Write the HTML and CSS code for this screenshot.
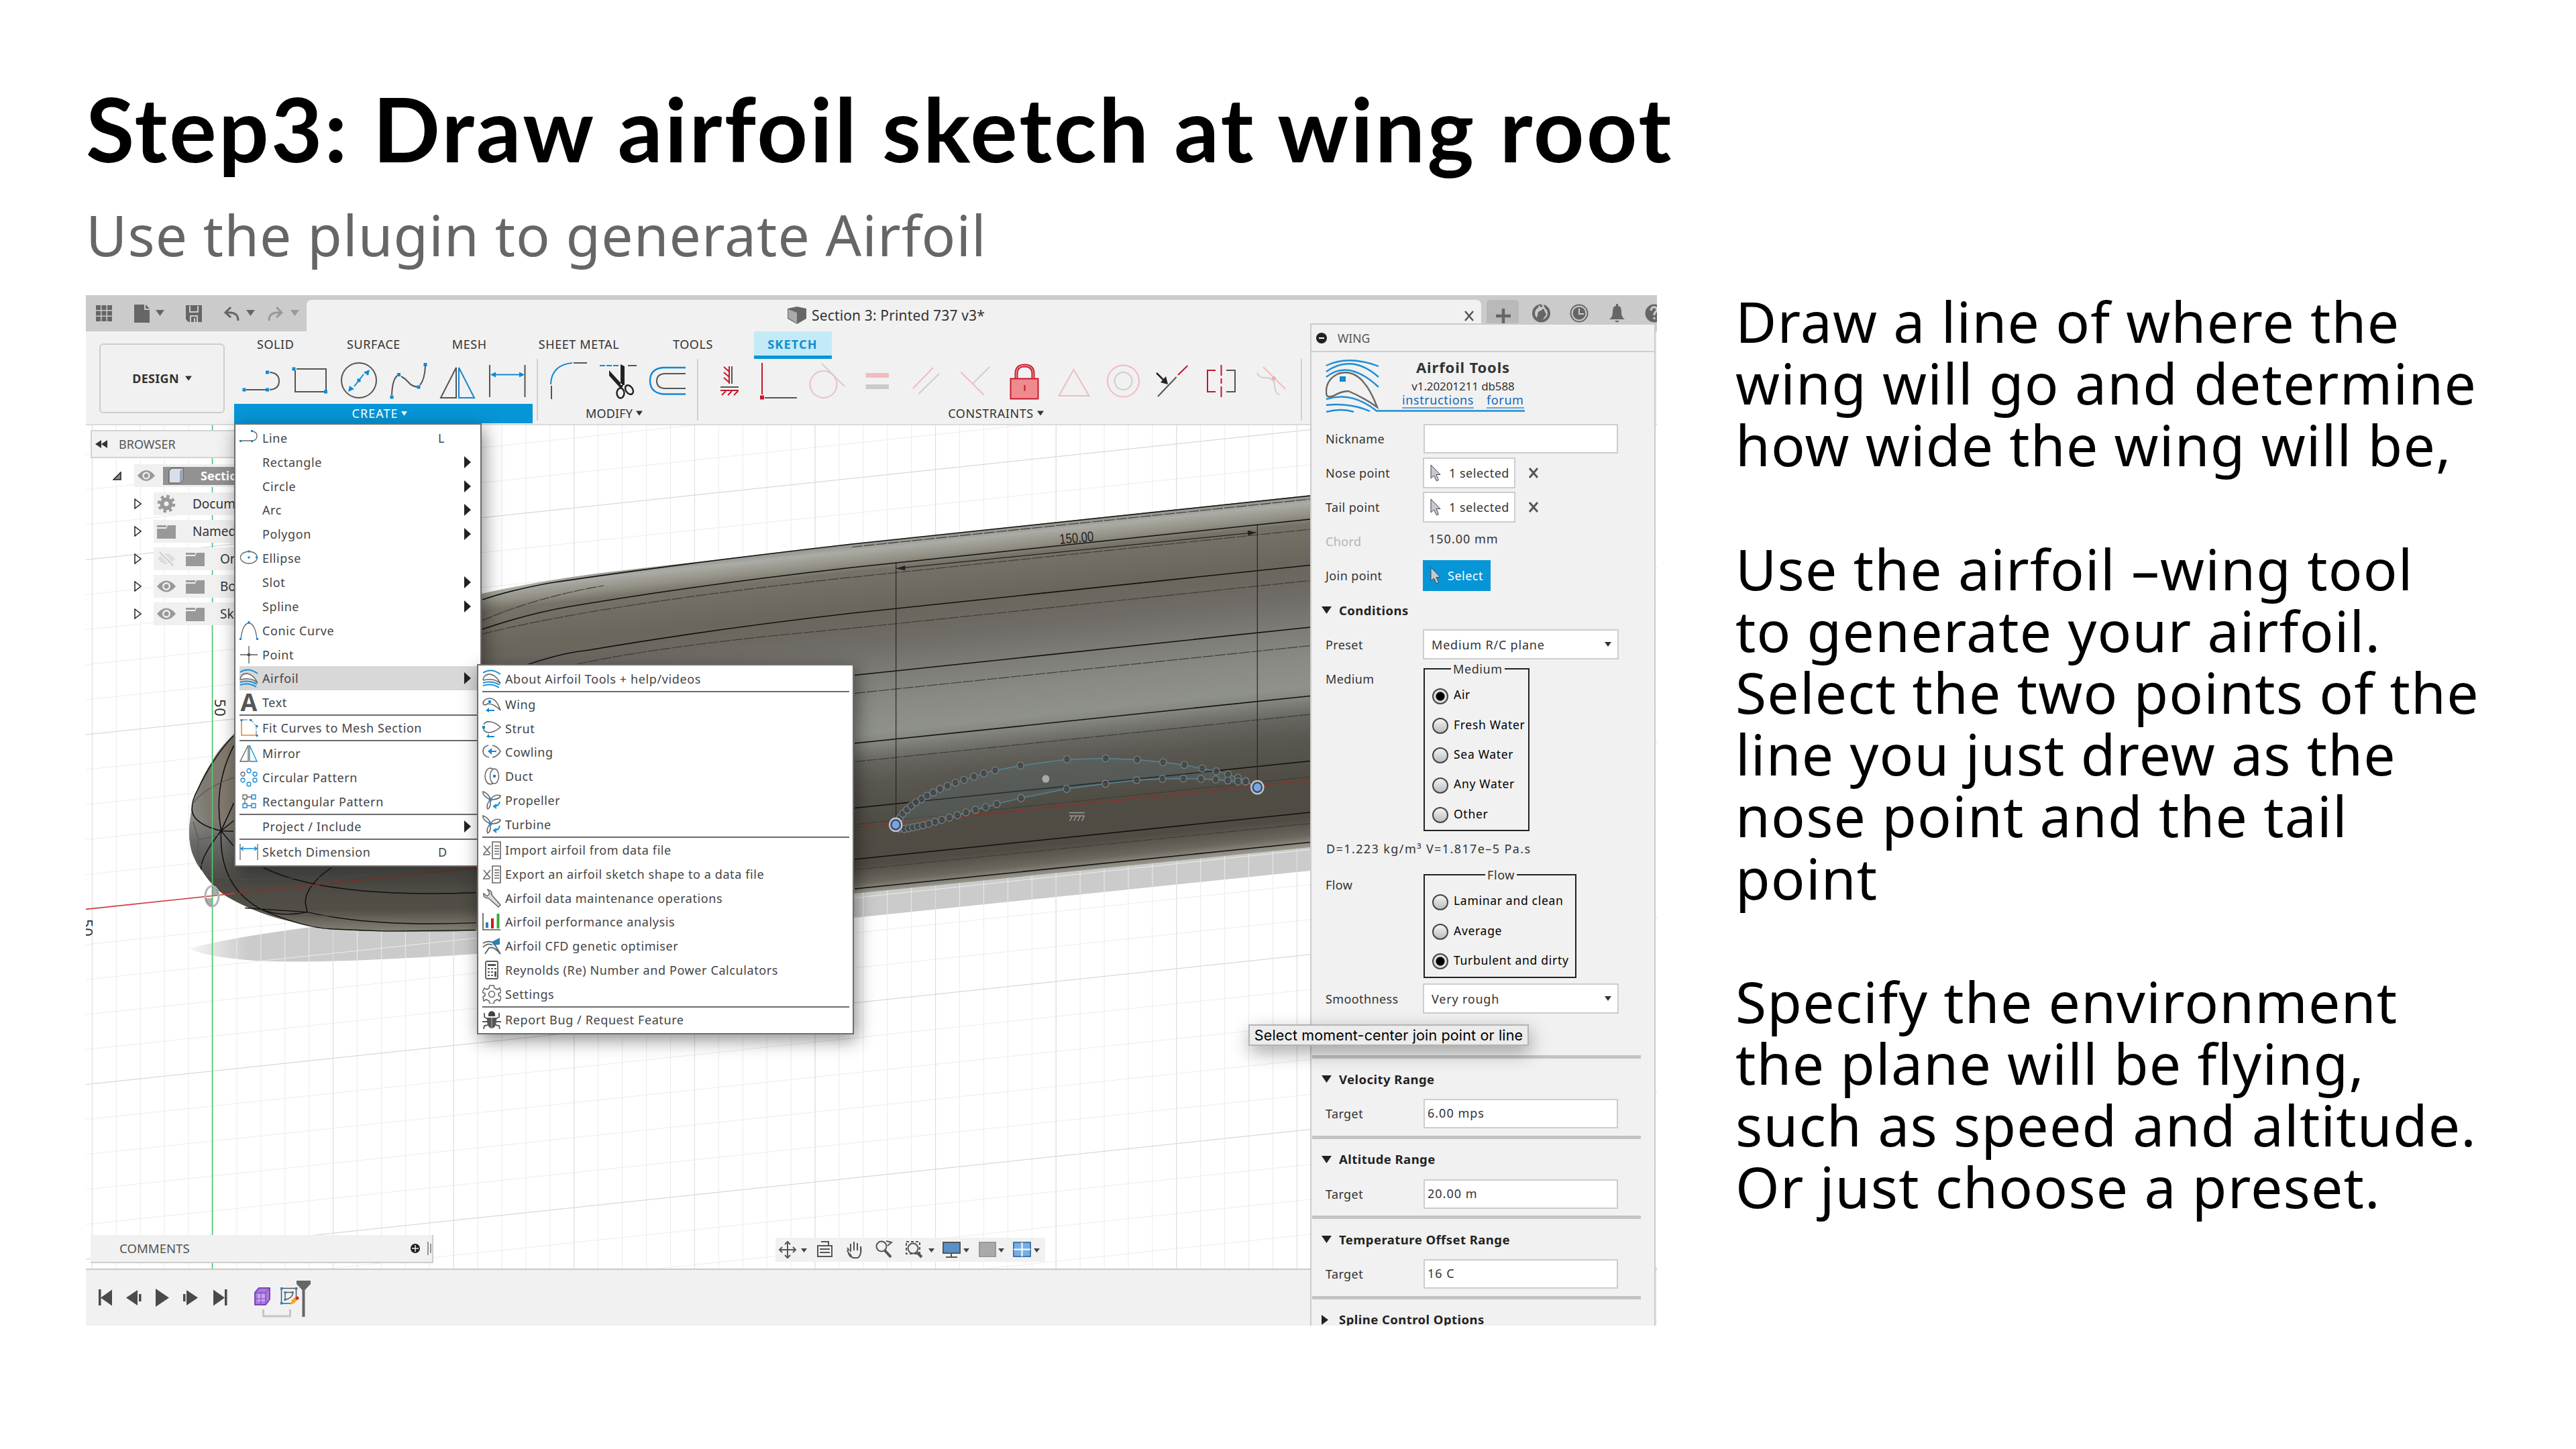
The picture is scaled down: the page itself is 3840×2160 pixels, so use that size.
FILE: index.html
```html
<!DOCTYPE html>
<html lang="en">
<head>
<meta charset="utf-8">
<title>Step3: Draw airfoil sketch at wing root</title>
<link rel="stylesheet" href="styles.css">
</head>
<body>
<svg class="defs" width="0" height="0">
  <symbol id="caret" viewBox="0 0 10 7"><path d="M0 0h10L5 7z" fill="currentColor"/></symbol>
  <symbol id="right" viewBox="0 0 10 18"><path d="M0 0l10 9-10 9z" fill="#222"/></symbol>
  <symbol id="flow" viewBox="0 0 28 28"><g fill="none" stroke-width="2"><path d="M1 5Q13-3 27 7" stroke="#1a8fd8"/><path d="M1 15Q3 6 12 7Q21 9 27 21Q17 12 2 16z" fill="#fff" stroke="#666" stroke-width="1.500"/><path d="M3 11Q9 5 16 9" stroke="#777" stroke-width="1"/><path d="M1 20Q14 16 26 23M1 24Q14 20 25 27" stroke="#1a8fd8"/></g></symbol>
  <symbol id="prop" viewBox="0 0 28 28"><g fill="#fff" stroke="#666" stroke-width="1.600"><path d="M12 13Q0 8 1 1Q10 4 12 13z"/><path d="M12 13Q18 4 27 7Q26 13 12 13z"/><path d="M12 13Q13 25 8 27Q5 21 12 13z"/></g><circle cx="12" cy="13" r="2.500" fill="#1a8fd8"/><path d="M26 16Q25 22 18 23m3-3l-4 3 4 3" fill="none" stroke="#1a8fd8" stroke-width="2"/></symbol>
  <symbol id="data" viewBox="0 0 28 28"><path d="M2 8l10 12M12 8L2 20M1 21h10M15 2h12v25H15zM18 8h7M18 12h7M18 16h7M18 20h7" fill="none" stroke="#666" stroke-width="1.600"/></symbol>
  <symbol id="folder" viewBox="0 0 28 22"><path d="M0 2h14v3H0zM16 2h12v20H0V7h14z" fill="#999"/></symbol>
  <symbol id="eye" viewBox="0 0 28 18"><path d="M0 9Q14-8 28 9Q14 26 0 9z" fill="#999"/><circle cx="14" cy="9" r="4.800" fill="#999" stroke="#f1f1f1" stroke-width="2.400"/></symbol>
  <symbol id="cursor" viewBox="0 0 16 26"><path d="M1 1v20l4.500-4 4 8 3-1.500-3.500-8h6z" fill="#c5c9d4" stroke="#444" stroke-width="1"/></symbol>
  <symbol id="cross" viewBox="0 0 16 16"><path d="M2 1l12 14M14 1L2 15" stroke="#555" stroke-width="3"/></symbol>
</svg>

<main class="slide">
  <h1>Step3: Draw airfoil sketch at wing root</h1>
  <p class="subtitle">Use the plugin to generate Airfoil</p>
  <div class="content">
    <section class="app">
      <header class="topbar">
        <svg class="quick" viewBox="128 440 329 54">
          <path d="M143 455h7v7h-7zm8.500 0h7v7h-7zm8.500 0h7v7h-7zM143 463.500h7v7h-7zm8.500 0h7v7h-7zm8.500 0h7v7h-7zM143 472h7v7h-7zm8.500 0h7v7h-7zm8.500 0h7v7h-7z" fill="#666"/>
          <path d="M200 454h15v8h8v19h-23zM217 454l6 6h-6z" fill="#666"/>
          <path d="M232 462h13l-6.500 9zM367 462h13l-6.500 9z" fill="#666"/><path d="M433 462h13l-6.500 9z" fill="#999"/>
          <path d="M277 455h24v25h-20l-4-4z" fill="#666"/><path d="M283 456v9h12v-9M284 480v-9h10v9M290 474v6" fill="none" stroke="#ccc" stroke-width="2"/>
          <path d="M344 458l-8 8 8 7M336 466h8q11 1 11 12" fill="none" stroke="#666" stroke-width="3"/>
          <path d="M412 458l8 8-8 7M420 466h-8q-11 1-11 12" fill="none" stroke="#999" stroke-width="3"/>
        </svg>
        <div class="doc-tab">
          <svg width="28" height="28" viewBox="0 0 28 28"><path d="M0 4l14-3 14 3v15l-14 8L0 19z" fill="#666"/><path d="M1 5l13 5v16L1 18z" fill="#aaa"/></svg>
          <span class="doc-name">Section 3: Printed 737 v3*</span>
        </div>
        <svg class="status" viewBox="2168 440 302 54">
          <path d="M2208 440h262v54h-262z" fill="#cbcbcb"/><path d="M2200 447q8 0 8 8v-8z" fill="#cbcbcb"/><path d="M2216 494v-41q0-6 6-6h36q6 0 6 6v41z" fill="#b9b9b9"/>
          <path d="M2184 464l12 14M2196 464l-12 14" stroke="#555" stroke-width="2.500"/>
          <path d="M2241 460v22M2230 471h22" stroke="#666" stroke-width="4.500"/>
          <circle cx="2297.500" cy="467" r="11.500" fill="none" stroke="#666" stroke-width="4"/><path d="M2290 478l3-13 8-5 4 9-5 7z" fill="#666"/><path d="M2297 463l-3-7M2302 460l-3-7" stroke="#cbcbcb" stroke-width="2.500"/>
          <circle cx="2354" cy="467" r="12.500" fill="none" stroke="#666" stroke-width="2"/><circle cx="2354" cy="467" r="9.500" fill="#666"/><path d="M2354 460v8h7" fill="none" stroke="#ccc" stroke-width="2"/>
          <path d="M2399 476q5-3 5-11 0-9 5-9v-3h3v3q5 0 5 9 0 8 5 11zM2407 478h7q-3.500 5-7 0z" fill="#666"/>
          <circle cx="2466" cy="467" r="13.500" fill="#666"/><path d="M2461 463q1-6 6-5 5 2 2 6-3 2-3 5v1m0 3v3" fill="none" stroke="#ccc" stroke-width="3"/>
        </svg>
      </header>

      <div class="toolbar">
        <div class="design"><span>DESIGN</span><svg width="10" height="8"><use href="#caret"/></svg></div>
        <div class="ribbon">
          <nav class="tabs"><span>SOLID</span><span>SURFACE</span><span>MESH</span><span>SHEET METAL</span><span>TOOLS</span><span class="active"><b>SKETCH</b></span></nav>
          <div class="groups">
            <div class="group create">
              <svg width="445" height="67" viewBox="349 535 445 67" fill="none" stroke="#555" stroke-width="2">
                <path d="M367 581h29M402 555q14 1 14 13t-14 13M440 552v32h44M442 550h44v32"/>
                <circle cx="535" cy="567" r="26"/><path d="M584 589q1-26 10-30M598 561q6 3 11 9t14 7M626 574q7-8 8-28M680 548l-23 45h23zM730 544v48M782.500 544v48"/>
                <path d="M684 548l23 45h-23zM528 576l14-18M733 558.500h47" stroke="#1089d6"/>
                <path d="M551 551l-2 9-7-5zM519 584l2-9 7 5zM731 558.500l8-4v8zM782 558.500l-8-4v8z" fill="#1089d6" stroke="none"/>
                <path d="M361.500 578.500h5v5h-5zm34.500 0h5v5h-5zm0-26h5v5h-5zM435.500 547.500h5v5h-5zm47.500 34h5v5h-5zM532.500 564.500h5v5h-5zM581.500 589.500h5v5h-5zM592 556h5v5h-5zM621.500 574.500h5v5h-5zM631.500 541h5v5h-5z" fill="#1089d6" stroke="none"/>
              </svg>
              <div class="label"><span>CREATE</span><svg width="9" height="7"><use href="#caret"/></svg></div>
            </div>
            <div class="group modify">
              <svg width="232" height="67" viewBox="807 535 232 67" fill="none" stroke="#555" stroke-width="2">
                <path d="M821 573q1-29 32-32" stroke="#1089d6"/><path d="M855 541h20M822 575v20M936 545h13"/><path d="M894 545h28" stroke="#1089d6" stroke-dasharray="8 2"/>
                <path d="M925 543l6 3v28h-6zM908 552v8l18 20 3-5z" fill="#222" stroke="none"/><ellipse cx="925" cy="586" rx="5.500" ry="7.500" stroke="#222" stroke-width="2.500"/><ellipse cx="938" cy="581" rx="5" ry="7.500" stroke="#222" stroke-width="2.500" transform="rotate(-35 938 581)"/>
                <path d="M1022 548h-34q-19 2-19 19.500t19 20h34" stroke="#1089d6" stroke-width="2.400"/><path d="M1022 557h-32q-11 1-11 11t11 11h32"/>
              </svg>
              <div class="label"><span>MODIFY</span><svg width="10" height="8"><use href="#caret"/></svg></div>
            </div>
            <div class="group constraints">
              <svg width="898" height="67" viewBox="1041 535 898 67" fill="none" stroke="#555" stroke-width="2">
                <path d="M1091 546v26M1074 577h27M1140 593h48M1726 591l27.600-29M1828 552h13v32h-13"/>
                <path d="M1087 546v26M1087 554l-8-7M1087 562l-8-7M1087 570l-8-7M1074 582h27M1082 583l-6 6M1091 583l-6 6M1100 583l-6 6M1136 541v47M1756 559l14.500-14M1812 552h-12v32h12M1820.500 544v16m0 4v8m0 4v16" stroke="#c5162b"/>
                <path d="M1133 589.500h6v6h-6z" fill="#c5162b" stroke="none"/>
                <g stroke="#f1bcc0"><circle cx="1227.500" cy="573" r="20"/><path d="M1361 579l30-31M1432.500 555l34.500 34M1600.500 551l-22 39h45zM1883 547l33 33"/><circle cx="1674.500" cy="568" r="23.500"/></g>
                <g stroke="#cecece"><path d="M1225 542l34 34M1369.500 587l30.500-30M1451 571l24-24M1874 556q3 8 12 7 14 0 14 12 1 12 7 13"/><circle cx="1674.500" cy="568" r="13"/></g>
                <path d="M1290.500 556h34.500v7h-34.500z" fill="#f1bcc0" stroke="none"/><path d="M1290.500 573h34.500v7h-34.500z" fill="#cbcbcb" stroke="none"/><circle cx="1899" cy="564" r="3" fill="#f1aab0" stroke="none"/>
                <path d="M1506.500 564.500h41v30h-41z" fill="#f08a8f" stroke="#c9192c"/><path d="M1515 564v-7q0-12 12.500-12t12.500 12v7" stroke="#c9192c" stroke-width="5"/><path d="M1515 564v-7q0-12 12.500-12t12.500 12v7" stroke="#f08a8f" stroke-width="1.500"/><path d="M1527.500 574v9" stroke="#c9192c"/>
                <path d="M1724 556l10 10" stroke="#222" stroke-width="2.500"/><path d="M1741 573l-3-12-8 9z" fill="#222" stroke="none"/>
              </svg>
              <div class="label"><span>CONSTRAINTS</span><svg width="10" height="8"><use href="#caret"/></svg></div>
            </div>
          </div>
        </div>
      </div>

      <div class="viewport">
        <svg class="scene" viewBox="128 634 2342 1257" preserveAspectRatio="none">
          <defs>
            <pattern id="v" patternUnits="userSpaceOnUse" x="316.500" width="35.920" height="100"><path d="M0 0v100" stroke="#ebebeb" stroke-width="2"/></pattern>
            <pattern id="v5" patternUnits="userSpaceOnUse" x="316.500" width="179.600" height="100"><path d="M0 0v100" stroke="#dcdcdc" stroke-width="2"/></pattern>
            <pattern id="h" patternUnits="userSpaceOnUse" width="400" height="52.150" patternTransform="translate(0 1369) skewY(-6.062)"><path d="M0 0h400" stroke="#ececec" stroke-width="2"/></pattern>
            <pattern id="h5" patternUnits="userSpaceOnUse" width="400" height="260.750" patternTransform="translate(0 1369) skewY(-6.062)"><path d="M0 0h400" stroke="#d6d6d6" stroke-width="2"/></pattern>
            <linearGradient id="skin" gradientUnits="userSpaceOnUse" x1="1270" y1="811" x2="1324.500" y2="1327">
              <stop offset="0" stop-color="#90928b"/><stop offset=".02" stop-color="#abaca5"/><stop offset=".055" stop-color="#928f85"/><stop offset=".08" stop-color="#777268"/><stop offset=".19" stop-color="#6a665b"/><stop offset=".28" stop-color="#6f6b66"/><stop offset=".37" stop-color="#7c7b75"/><stop offset=".46" stop-color="#898a83"/><stop offset=".545" stop-color="#8f918b"/><stop offset=".58" stop-color="#82837e"/><stop offset=".63" stop-color="#67655f"/><stop offset=".69" stop-color="#5a5751"/><stop offset=".8" stop-color="#504d45"/><stop offset=".92" stop-color="#504c44"/><stop offset=".97" stop-color="#6b675e"/><stop offset="1" stop-color="#97958a"/>
            </linearGradient>
            <linearGradient id="nose" gradientUnits="userSpaceOnUse" x1="282" y1="1200" x2="420" y2="1180"><stop offset="0" stop-color="#8b8b84"/><stop offset=".2" stop-color="#7d7970"/><stop offset=".45" stop-color="#857b70"/><stop offset="1" stop-color="#857b70" stop-opacity="0"/></linearGradient>
            <linearGradient id="chin" gradientUnits="userSpaceOnUse" x1="0" y1="1220" x2="0" y2="1390"><stop offset="0" stop-color="#6f706d" stop-opacity="0"/><stop offset=".2" stop-color="#6a6b69"/><stop offset=".55" stop-color="#4c4a44"/><stop offset=".8" stop-color="#534f46"/><stop offset="1" stop-color="#888377"/></linearGradient>
            <linearGradient id="shade" gradientUnits="userSpaceOnUse" x1="282" y1="0" x2="370" y2="0"><stop offset="0" stop-color="#cbcbcb" stop-opacity=".2"/><stop offset="1" stop-color="#cbcbcb"/></linearGradient>
            <marker id="pt" markerUnits="userSpaceOnUse" markerWidth="28" markerHeight="28" refX="14" refY="14" viewBox="0 0 28 28"><circle cx="14" cy="14" r="11" fill="#3c4144" fill-opacity=".75" stroke="#777c7d" stroke-width="3"/></marker>
          </defs>
          <path d="M128 634h2342v1257H128z" fill="#fff"/>
          <path d="M282 1414Q340 1398 464 1382L1953 1230V1298L1274 1368L709 1422Q440 1440 357 1430Q300 1424 282 1414z" fill="url(#shade)"/>
          <path d="M128 634h2342v1257H128z" fill="url(#h)"/><path d="M128 634h2342v1257H128z" fill="url(#v)"/><path d="M128 634h2342v1257H128z" fill="url(#h5)"/><path d="M128 634h2342v1257H128z" fill="url(#v5)"/>
          <path d="M1953 738L1270 811L940 849Q820 862 718 885Q450 960 347 1096Q325 1118 318 1132Q300 1160 294 1179Q284 1202 282 1239Q282 1262 288 1275Q294 1290 300 1296Q318 1325 341 1338Q385 1363 436 1374Q500 1389 575 1388Q650 1390 709 1387.500L1274 1332L1953 1263z" fill="url(#skin)"/>
          <path d="M718 885Q450 960 347 1096Q325 1118 318 1132Q300 1160 294 1179Q284 1202 282 1239Q282 1262 288 1275Q294 1290 300 1296Q318 1325 341 1338Q385 1363 436 1374Q500 1389 575 1388Q650 1390 709 1387.500z" fill="url(#nose)"/>
          <path d="M282 1225Q282 1262 288 1275Q294 1290 300 1296Q318 1325 341 1338Q385 1363 436 1374Q500 1389 575 1388Q650 1390 709 1387.500V1225z" fill="url(#chin)"/>
          <g fill="none" stroke="#111" stroke-width="1.600">
            <path d="M719 894Q760 880 820 869Q1000 842 1270 811L1953 739M719 938Q790 914 850 904Q1040 872 1270 846L1953 774M760 1000Q830 974 872 970Q1060 938 1270 914L1953 842.500M1274 1006.500L1953 935M1274 1108L1953 1037.500M1274 1204.500L1953 1134.500M1274 1281L1953 1211M1274 1325L1953 1255.500"/>
            <g stroke="#3f3d38" stroke-width="1.200" stroke-dasharray="16 2"><path d="M719 925Q800 890 900 873M1270 815.500L1953 744M719 945Q900 900 1270 860.500L1953 789M860 990Q1000 960 1270 936.500L1953 865.500M1274 1033.500L1953 962.500M1274 1135.500L1953 1065M1274 1229L1953 1158M1274 1296.500L1953 1227.500"/></g>
            <g transform="translate(120 900) scale(.3954 .3571)" stroke-width="4">
              <path d="M576 552Q500 640 440 780Q420 820 420 860Q425 920 530 948L576 950M578 592Q500 760 530 948L578 832M530 948L578 905M530 948L576 1010M530 948Q450 1060 455 1110M530 948Q520 1180 680 1275Q760 1310 855 1287L620 1270M855 1287Q1100 1350 1490 1332M848 1250Q845 1180 945 1102M848 1250L855 1287M690 1102Q930 1230 1490 1206M680 1275Q830 1350 950 1358L1150 1367L1490 1362"/>
              <path stroke="#555" stroke-width="3" d="M578 725Q470 765 422 835M425 910L445 985Q430 1060 480 1135L610 1150L1000 1140L1320 1103M445 985L530 965M780 1300Q1000 1310 1490 1272"/>
            </g>
          </g>
          <g fill="none" stroke-width="1.600"><path d="M128 1355.400L350 1331.800" stroke="#d23c3c"/><path d="M350 1331.800L709 1293.700M1274 1234L1953 1163" stroke="#83352a"/><path d="M316.500 634V1891" stroke="#4ccb72"/></g>
          <ellipse cx="316" cy="1336" rx="10" ry="15" fill="none" stroke="#b5b5b5" stroke-width="3"/><path d="M306 1339h10v12q-8-2-10-12zM316 1321q8 3 10 12l-10 2z" fill="#777" fill-opacity=".6"/>
          <g class="axis"><text transform="translate(320 1042) rotate(90)">50</text><text transform="translate(122 1370) rotate(90)">50</text></g>
          <g transform="translate(1270 640) scale(.4592 .4847)">
            <path d="M143 1195V410M1316 1080V292M143 428L1313 317" fill="none" stroke="#222" stroke-width="2.500"/>
            <path d="M143 428l30-9v15zM1313 317l-28-6v16z" fill="#222"/>
            <path d="M142 1215C200 1130 400 1060 547 1034C900 980 1150 1030 1315 1100C1000 1040 650 1110 470 1152C330 1190 200 1245 142 1215z" fill="#5f7378" fill-opacity=".28"/>
            <polyline class="profile" points="142,1215 155,1195 165,1182 178,1170 192,1158 208,1147 226,1137 244,1127 264,1117 286,1106 310,1097 336,1087 364,1078 396,1068 428,1058 465,1049 547,1034 698,1015 824,1012 926,1016 1010,1024 1079,1032 1137,1043 1183,1052 1221,1061 1253,1072 1278,1082 1315,1100"/>
            <polyline class="profile" points="142,1215 155,1228 170,1229 184,1227 198,1224 213,1221 230,1218 249,1213 270,1207 292,1201 316,1194 342,1187 370,1178 401,1170 434,1162 470,1152 549,1134 697,1106 823,1090 924,1079 1008,1075 1076,1074 1133,1075 1181,1077 1220,1080 1253,1083 1278,1083 1315,1100"/>
            <circle cx="629" cy="1075" r="12" fill="#a9aaa6"/>
            <g stroke="#999" stroke-width="3" fill="none"><path d="M705 1179h50M705 1189h50M715 1190l-8 14M728 1190l-8 14M741 1190l-8 14M754 1190l-8 14"/></g>
            <g stroke="#c4c8cc" stroke-width="5"><circle cx="142" cy="1216" r="20" fill="#39506e"/><circle cx="1316" cy="1101" r="20" fill="#39506e"/></g><circle cx="142" cy="1216" r="12" fill="#7da4e0"/><circle cx="1316" cy="1101" r="12" fill="#7da4e0"/>
          </g>
          <text class="dim" transform="translate(1580 811) rotate(-5)" textLength="51" lengthAdjust="spacingAndGlyphs">150.00</text>
        </svg>
      </div>

      <footer class="timeline">
        <svg width="400" height="84" viewBox="128 1892 400 84">
          <path d="M147 1921h3.500v24h-3.500zM167 1921.500v24L150 1933.500zM205 1922v23l-17-11.500zM207 1928h3.500v11h-3.500zM232 1920l20 13.500-20 13.500zM273 1928h3.500v11h-3.500zM278 1922v23l17-11.500zM318 1921.500v24l17-12zM335 1921h3.500v24h-3.500z" fill="#4a4a4a"/>
          <path d="M380 1926l6-7h16v17l-6 8h-16z" fill="#a97bdc" stroke="#7b45b8" stroke-width="2" stroke-linejoin="round"/><path d="M384 1928h11v11h-11z" fill="#c7a4ee"/><path d="M380 1926h16v18M396 1926l6-7M389 1926v18M380 1935h16" fill="none" stroke="#7b45b8"/>
          <path d="M419.500 1919.500h22v17M419.500 1919.500v22.500h14M425 1925.500h12q-1 9-12 11z" fill="none" stroke="#555" stroke-width="1.500"/><path d="M418 1918h3.500v3.500H418zm22 0h3.500v3.500H440zM418 1940h3.500v3.500H418zM423.500 1924h3v3h-3zm11 0h3v3h-3zm-11 11h3v3h-3z" fill="#1089d6"/><path d="M433 1944l2-7 7-6 3 4-7 7z" fill="#f0a91c"/><circle cx="443" cy="1934" r="2.500" fill="#dc1f26"/>
          <path d="M392.500 1951v10h40v-10" fill="none" stroke="#c6c6c6" stroke-width="3"/>
          <path d="M442 1908h21v5l-8.500 9v40h-4v-40l-8.500-9z" fill="#666"/>
        </svg>
      </footer>

      <aside class="browser">
        <div class="browser-head"><svg width="18" height="12"><path d="M9 0v12L0 6zM18 0v12L9 6z" fill="#333"/></svg><span>BROWSER</span></div>
        <div class="node root"><svg width="13" height="13"><path d="M12 1v11H1z" fill="#888" stroke="#222" stroke-width="1.500"/></svg><div class="cell"><svg width="26" height="18"><use href="#eye"/></svg><div class="sel"><svg width="24" height="24"><path d="M1 5l4-4h17v17l-5 5H1z" fill="#d8deea" stroke="#444"/><path d="M17 23V5l5-4v17z" fill="#9aa6ba"/></svg><b>Sectic</b></div></div></div>
        <div class="node"><svg class="tw" width="11" height="16"><path d="M1 1l9 7-9 7z" fill="#fff" stroke="#222" stroke-width="1.500"/></svg><div class="cell"><svg width="28" height="28"><circle cx="14" cy="14" r="6.500" fill="none" stroke="#999" stroke-width="6"/><circle cx="14" cy="14" r="11" fill="none" stroke="#999" stroke-width="4.500" stroke-dasharray="4.320"/></svg><span>Docum</span></div></div>
        <div class="node"><svg class="tw" width="11" height="16"><path d="M1 1l9 7-9 7z" fill="#fff" stroke="#222" stroke-width="1.500"/></svg><div class="cell"><svg width="28" height="22"><use href="#folder"/></svg><span>Named</span></div></div>
        <div class="node"><svg class="tw" width="11" height="16"><path d="M1 1l9 7-9 7z" fill="#fff" stroke="#222" stroke-width="1.500"/></svg><div class="cell deep"><svg width="28" height="22"><path d="M1 11Q14-5 27 11Q14 27 1 11z" fill="#ddd"/><path d="M4 0l20 22" stroke="#f1f1f1" stroke-width="6"/><path d="M4 1l20 20" stroke="#ccc" stroke-width="2"/></svg><svg width="28" height="22"><use href="#folder"/></svg><span>Or</span></div></div>
        <div class="node"><svg class="tw" width="11" height="16"><path d="M1 1l9 7-9 7z" fill="#fff" stroke="#222" stroke-width="1.500"/></svg><div class="cell deep"><svg width="28" height="18"><use href="#eye"/></svg><svg width="28" height="22"><use href="#folder"/></svg><span>Bo</span></div></div>
        <div class="node"><svg class="tw" width="11" height="16"><path d="M1 1l9 7-9 7z" fill="#fff" stroke="#222" stroke-width="1.500"/></svg><div class="cell deep hatch"><svg width="28" height="18"><use href="#eye"/></svg><svg width="28" height="22"><use href="#folder"/></svg><span>Sk</span></div></div>
      </aside>

      <div class="comments"><span>COMMENTS</span><svg width="32" height="22"><circle cx="8" cy="11" r="7" fill="#222"/><path d="M8 6v10M3 11h10" stroke="#eee" stroke-width="1.500"/><path d="M27 1v20M31 4v14" stroke="#777" stroke-width="1.500"/></svg></div>

      <svg class="navbar" width="402" height="36" viewBox="1156 1845 402 36" fill="none" stroke="#555" stroke-width="2">
        <path d="M1156 1845h402v36h-402z" fill="#f1f1f1" stroke="none"/>
        <path d="M1174 1851v24M1162 1863h24M1170 1855l4-4 4 4M1170 1871l4 4 4-4M1166 1859l-4 4 4 4M1182 1859l4 4-4 4"/>
        <path d="M1219 1857h21v16h-21zM1222 1862h15M1222 1867h15M1224 1851h11v6"/>
        <path d="M1266 1864l-3-4M1268 1874q-3-4-5-11M1268 1866v-12M1273 1864v-13M1278 1864v-11M1283 1866v-8q2 12-4 17h-8l-5-7"/>
        <circle cx="1314" cy="1858" r="7.500"/><path d="M1319 1864l9 10" stroke-width="4"/><path d="M1321 1850l8 2-6 5"/>
        <circle cx="1361" cy="1861" r="7.500"/><path d="M1367 1867l7 7" stroke-width="4"/><path d="M1351 1851h20v18h-20z" stroke-dasharray="4 3"/>
        <path d="M1406 1852h25v16h-25z" fill="#5b8fc7"/><path d="M1418 1868v6M1410 1874h17"/>
        <path d="M1460 1852h24v21h-24z" fill="#aaa" stroke="#999"/>
        <path d="M1511 1852h25v21h-25z" fill="#79aee0" stroke="#3f77b2"/><path d="M1523.500 1852v21M1511 1862.500h25" stroke="#fff"/>
        <path d="M1194 1861h9l-4.500 6zM1384 1861h9l-4.500 6zM1436 1861h9l-4.500 6zM1488 1861h9l-4.500 6zM1541 1861h9l-4.500 6z" fill="#444" stroke="none"/>
      </svg>

      <aside class="panel">
        <div class="panel-head"><svg width="16" height="16"><circle cx="8" cy="8" r="8" fill="#222"/><path d="M4 8h8" stroke="#fff" stroke-width="2"/></svg><span>WING</span></div>
        <div class="brand">
          <svg width="298" height="80" viewBox="1976 534 298 80" fill="none" stroke="#1a8fd8" stroke-width="2.400"><path d="M1977 544Q2010 528 2055 545M1977 553Q2015 526 2055 561M1977 561Q2010 534 2055 576M1977 603Q2012 599 2042 612M1977 613Q2000 607 2018 613M1977 594Q2015 582 2052 611.500H2273"/><path d="M1977 585Q1976 565 1995 556Q2030 545 2053 606Q2030 590 2010 582Q2000 582 1988 589Q1977 593 1977 585z" stroke="#666" fill="#f1f1f1"/><path d="M1997 560h9v8h-9z" fill="#1089d6" stroke="none"/></svg>
          <div class="brand-text"><b>Airfoil Tools</b><small>v1.20201211 db588</small><p><a>instructions</a><a>forum</a></p></div>
        </div>
        <div class="form">
          <div class="row"><label>Nickname</label><div class="input"></div></div>
          <div class="row"><label>Nose point</label><div class="pick"><svg width="16" height="26"><use href="#cursor"/></svg><span>1 selected</span></div><svg class="x" width="16" height="16"><use href="#cross"/></svg></div>
          <div class="row"><label>Tail point</label><div class="pick"><svg width="16" height="26"><use href="#cursor"/></svg><span>1 selected</span></div><svg class="x" width="16" height="16"><use href="#cross"/></svg></div>
          <div class="row muted"><label>Chord</label><span class="value">150.00 mm</span></div>
          <div class="row"><label>Join point</label><div class="pick on"><svg width="16" height="26"><use href="#cursor"/></svg><span>Select</span></div></div>
          <h3><svg width="15" height="11"><path d="M0 0h15L7.500 11z" fill="#222"/></svg>Conditions</h3>
          <div class="row preset"><label>Preset</label><div class="select"><span>Medium R/C plane</span><svg width="10" height="7"><use href="#caret"/></svg></div></div>
          <div class="row tall medium"><label>Medium</label><div class="box"><em>Medium</em><p><i class="on"></i>Air</p><p><i></i>Fresh Water</p><p><i></i>Sea Water</p><p><i></i>Any Water</p><p><i></i>Other</p></div></div>
          <div class="note">D=1.223 kg/m³ V=1.817e–5 Pa.s</div>
          <div class="row tall flowrow"><label>Flow</label><div class="box wide"><em>Flow</em><p><i></i>Laminar and clean</p><p><i></i>Average</p><p><i class="on"></i>Turbulent and dirty</p></div></div>
          <div class="row preset"><label>Smoothness</label><div class="select"><span>Very rough</span><svg width="10" height="7"><use href="#caret"/></svg></div></div>
        </div>
        <div class="range"><h3><svg width="15" height="11"><path d="M0 0h15L7.500 11z" fill="#222"/></svg>Velocity Range</h3><div class="row"><label>Target</label><div class="input">6.00 mps</div></div></div>
        <div class="range"><h3><svg width="15" height="11"><path d="M0 0h15L7.500 11z" fill="#222"/></svg>Altitude Range</h3><div class="row"><label>Target</label><div class="input">20.00 m</div></div></div>
        <div class="range"><h3><svg width="15" height="11"><path d="M0 0h15L7.500 11z" fill="#222"/></svg>Temperature Offset Range</h3><div class="row"><label>Target</label><div class="input">16 C</div></div></div>
        <div class="range"><h3><svg width="15" height="15"><path d="M0 0l10 7.500L0 15z" fill="#222"/></svg>Spline Control Options</h3></div>
      </aside>

      <div class="menu create-menu">
        <div class="item"><svg viewBox="0 0 28 28"><path d="M2 18h16M18 4q8 0 8 7t-8 7" fill="none" stroke="#666" stroke-width="1.300"/><path d="M0 17h3v3H0zm17 0h3v3h-3zm0-15h3v3h-3z" fill="#1089d6"/></svg><span>Line</span><kbd>L</kbd></div>
        <div class="item"><svg></svg><span>Rectangle</span><svg class="arrow"><use href="#right"/></svg></div>
        <div class="item"><svg></svg><span>Circle</span><svg class="arrow"><use href="#right"/></svg></div>
        <div class="item"><svg></svg><span>Arc</span><svg class="arrow"><use href="#right"/></svg></div>
        <div class="item"><svg></svg><span>Polygon</span><svg class="arrow"><use href="#right"/></svg></div>
        <div class="item"><svg viewBox="0 0 28 28"><ellipse cx="14" cy="13" rx="12.500" ry="9" fill="none" stroke="#666" stroke-width="1.300"/><path d="M12.500 2.500h3v3h-3zm0 9h3v3h-3zm11.500 0h3v3h-3z" fill="#1089d6"/></svg><span>Ellipse</span></div>
        <div class="item"><svg></svg><span>Slot</span><svg class="arrow"><use href="#right"/></svg></div>
        <div class="item"><svg></svg><span>Spline</span><svg class="arrow"><use href="#right"/></svg></div>
        <div class="item"><svg viewBox="0 0 28 28"><path d="M2 26Q5 3 14 3t12 23" fill="none" stroke="#666" stroke-width="1.300"/><path d="M0 25h3v3H0zm25 0h3v3h-3zM12.500 0h3v3h-3z" fill="#1089d6"/></svg><span>Conic Curve</span></div>
        <div class="item"><svg viewBox="0 0 28 28"><path d="M1 14h26M14 1v26" stroke="#555" stroke-width="1.300"/><path d="M12 12h4v4h-4z" fill="#555"/></svg><span>Point</span></div>
        <div class="item hot"><svg><use href="#flow"/></svg><span>Airfoil</span><svg class="arrow"><use href="#right"/></svg></div>
        <div class="item"><strong>A</strong><span>Text</span></div>
        <hr>
        <div class="item"><svg viewBox="0 0 28 28"><path d="M3 4v21h23" fill="none" stroke="#e08a2c" stroke-width="1.600"/><path d="M3 2h14l8 9v14" fill="none" stroke="#666" stroke-dasharray="9 2"/><path d="M1.500 1h3v3h-3zm14 0h3v3h-3zm9 9h3v3h-3zm0 14h3v3h-3z" fill="#1089d6"/></svg><span>Fit Curves to Mesh Section</span></div>
        <hr>
        <div class="item"><svg viewBox="0 0 28 28"><path d="M13 2v24H1z" fill="none" stroke="#666" stroke-width="1.300"/><path d="M15 2v24h11z" fill="none" stroke="#1089d6" stroke-width="1.300"/></svg><span>Mirror</span></div>
        <div class="item"><svg viewBox="0 0 28 28"><g fill="none" stroke="#1089d6" stroke-width="1.300"><circle cx="14" cy="4" r="3"/><circle cx="23" cy="9" r="3"/><circle cx="23" cy="18" r="3"/><circle cx="14" cy="24" r="3"/><circle cx="5" cy="18" r="3"/><circle cx="5" cy="9" r="3" stroke="#666"/></g></svg><span>Circular Pattern</span></div>
        <div class="item"><svg viewBox="0 0 28 28"><path d="M5 4h6v6H5zM11 7h8M8 10v8" fill="none" stroke="#666" stroke-width="1.300"/><path d="M18 4h6v6h-6zM5 17h6v6H5zM18 17h6v6h-6zM11 20h7" fill="none" stroke="#1089d6" stroke-width="1.300"/></svg><span>Rectangular Pattern</span></div>
        <hr>
        <div class="item"><svg></svg><span>Project / Include</span><svg class="arrow"><use href="#right"/></svg></div>
        <hr>
        <div class="item"><svg viewBox="0 0 28 28"><path d="M1 2v24M27 2v24" stroke="#666" stroke-width="1.300"/><path d="M2 9h24M6 6L2 9l4 3M22 6l4 3-4 3" fill="none" stroke="#1089d6" stroke-width="1.300"/></svg><span>Sketch Dimension</span><kbd>D</kbd></div>
      </div>

      <div class="menu sub-menu">
        <div class="item"><svg><use href="#flow"/></svg><span>About Airfoil Tools + help/videos</span></div>
        <hr>
        <div class="item"><svg viewBox="0 0 28 28"><path d="M1 12Q3 5 11 5Q21 5 27 23Q18 13 8 13Q2 17 1 12z" fill="none" stroke="#666" stroke-width="1.600"/><path d="M9 8h4v4H9zM7 22h11v2H7zM10 19v7l-5-3z" fill="#1089d6"/></svg><span>Wing</span></div>
        <div class="item"><svg viewBox="0 0 28 28"><path d="M2 8Q4 3 12 4Q20 5 27 12Q18 20 9 20Q2 19 2 14" fill="none" stroke="#666" stroke-width="1.600"/><path d="M0 10h4v4H0zM7 25h11v2H7zM10 22v6l-4-2z" fill="#1089d6"/></svg><span>Strut</span></div>
        <div class="item"><svg viewBox="0 0 28 28"><path d="M9 4Q1 6 1 13t9 9M15 4q7 1 12 9-5 8-12 9" fill="none" stroke="#666" stroke-width="1.600"/><path d="M8 13l6-5v4h7v2h-7v4z" fill="#1089d6"/></svg><span>Cowling</span></div>
        <div class="item"><svg viewBox="0 0 28 28"><ellipse cx="12" cy="14" rx="8" ry="12" fill="none" stroke="#666" stroke-width="1.500"/><ellipse cx="18" cy="14" rx="6.500" ry="11" fill="#fff" stroke="#666" stroke-width="1.500"/><path d="M16 12h4v4h-4z" fill="#1089d6"/></svg><span>Duct</span></div>
        <div class="item"><svg><use href="#prop"/></svg><span>Propeller</span></div>
        <div class="item"><svg><use href="#prop"/></svg><span>Turbine</span></div>
        <hr>
        <div class="item"><svg><use href="#data"/></svg><span>Import airfoil from data file</span></div>
        <div class="item"><svg><use href="#data"/></svg><span>Export an airfoil sketch shape to a data file</span></div>
        <div class="item"><svg viewBox="0 0 28 28"><path d="M2 7q-1 7 7 7l15 13 3-3L14 9q1-6-6-8l3 6-4 4z" fill="#ddd" stroke="#666" stroke-width="1.500"/></svg><span>Airfoil data maintenance operations</span></div>
        <div class="item"><svg viewBox="0 0 28 28"><path d="M1 1v25h26" fill="none" stroke="#555" stroke-width="1.600"/><path d="M5 15h4v8H5z" fill="#2d7fae"/><path d="M13 9h4v15h-4z" fill="#c02026"/><path d="M21.500 2h4v22h-4z" fill="#37ab3f"/></svg><span>Airfoil performance analysis</span></div>
        <div class="item"><svg viewBox="0 0 28 28"><path d="M1 10Q10 5 17 10L27 26Q17 14 10 17L4 26M1 16Q8 9 15 13" fill="none" stroke="#666" stroke-width="2"/><path d="M14 8l12-6v10l-9 1z" fill="#2b7fb5"/></svg><span>Airfoil CFD genetic optimiser</span></div>
        <div class="item"><svg viewBox="0 0 28 28"><rect x="5" y="1" width="18" height="26" rx="2" fill="none" stroke="#555" stroke-width="1.800"/><path d="M8 5h12v3H8zM8 11h3v2H8zm5 0h3v2h-3zm5 0h3v2h-3zM8 16h3v2H8zm5 0h3v2h-3zM8 21h3v2H8zm5 0h3v2h-3zM18 16h3v8h-3z" fill="#555"/></svg><span>Reynolds (Re) Number and Power Calculators</span></div>
        <div class="item"><svg viewBox="0 0 28 28"><path d="M11 1h6l1 4 4 2 4-2 2 6-4 2v3l4 2-2 6-4-2-4 2-1 4h-6l-1-4-4-2-4 2-1-6 3-2v-3l-4-2 3-6 4 2 3-2z" fill="none" stroke="#666" stroke-width="1.600"/><circle cx="14" cy="14" r="4.500" fill="none" stroke="#666" stroke-width="1.600"/></svg><span>Settings</span></div>
        <hr>
        <div class="item"><svg viewBox="0 0 28 28"><path d="M9 9q-1-7 5-8 6 1 5 8z" fill="#444"/><path d="M7 11h14q1 15-7 16-8-1-7-16z" fill="#555"/><path d="M14 11v16" stroke="#bbb"/><path d="M8 13L3 10V4M20 13l5-3V4M7 17H0M21 17h7M8 22l-5 1-1 5M20 22l5 1 1 5" fill="none" stroke="#555" stroke-width="1.800"/></svg><span>Report Bug / Request Feature</span></div>
      </div>

      <div class="tooltip"><span>Select moment-center join point or line</span></div>
    </section>

    <article class="notes">
      <p><span>Draw a line of where the</span><span>wing will go and determine</span><span>how wide the wing will be,</span></p>
      <p><span>Use the airfoil –wing tool</span><span>to generate your airfoil.</span><span>Select the two points of the</span><span>line you just drew as the</span><span>nose point and the tail</span><span>point</span></p>
      <p><span>Specify the environment</span><span>the plane will be flying,</span><span>such as speed and altitude.</span><span>Or just choose a preset.</span></p>
    </article>
  </div>
</main>
</body>
</html>
```
FILE: styles.css
```css
* { box-sizing: border-box; }
body { margin: 0; background: #fff; font-family: "Noto Sans", "Open Sans", sans-serif; color: #333; }
svg { display: block; flex: none; }
p, h1, h3 { margin: 0; }
.defs { position: absolute; }
.slide { width: 3840px; height: 2160px; padding: 111px 0 0 128px; overflow: hidden; }
h1 { font: bold 132px/160px Lato, sans-serif; letter-spacing: 3.100px; color: #000; white-space: nowrap; }
.subtitle { margin-top: 24px; font-size: 84px; line-height: 110px; letter-spacing: 1px; color: #666; white-space: nowrap; }
.content { display: flex; align-items: flex-start; gap: 117px; margin-top: 35px; }
.notes { margin-top: -7px; font-size: 84px; line-height: 92.170px; letter-spacing: 1.200px; color: #000; }
.notes p + p { margin-top: 92.170px; }
.notes span { display: block; white-space: nowrap; }

.app { position: relative; display: flex; flex-direction: column; width: 2342px; height: 1536px; overflow: hidden; background: #f1f1f1; font-size: 18px; line-height: 24px; letter-spacing: .6px; white-space: nowrap; }
.topbar { display: flex; height: 54px; background: #cbcbcb; }
.quick { width: 329px; height: 54px; }
.doc-tab { flex: 1; margin-top: 7px; display: flex; align-items: center; gap: 8px; padding: 0 0 1px 717px; background: #f1f1f1; border-radius: 7px 0 0 0; font-size: 21px; letter-spacing: .150px; }
.status { width: 302px; height: 54px; background: linear-gradient(#cbcbcb 7px, #f1f1f1 7px); }

.toolbar { display: flex; height: 140px; border-bottom: 2px solid #dadada; color: #333; }
.design { display: flex; align-items: center; justify-content: center; gap: 9px; width: 187px; height: 104px; margin: 18px 0 0 20px; border: 2px solid #cdcdcd; border-radius: 6px; font-weight: bold; letter-spacing: .300px; }
.ribbon { flex: 1; margin-left: 9.500px; }
.tabs { display: grid; grid-template-columns: 132.500px 160px 125.500px 201px 139px 157.500px; height: 41px; }
.tabs span { text-align: center; line-height: 39px; }
.active b { display: block; width: 116px; height: 41px; margin-left: 21px; background: #c5eaf7; border-bottom: 5px solid #0696d7; color: #0d8fd0; letter-spacing: 1.200px; }
.groups { display: flex; height: 99px; margin-left: 4px; }
.group { height: 92px; }
.group .label { display: flex; align-items: center; justify-content: center; gap: 5px; height: 29px; padding: 0 10px 1px 0; }
.create { width: 445px; }
.create .label { background: #0696d7; color: #fff; letter-spacing: 1px; }
.modify { margin-left: 6px; border-left: 2px solid #d0d0d0; padding-left: 5px; }
.modify .label { letter-spacing: .150px; padding-right: 14px; }
.constraints { border-left: 2px solid #d0d0d0; border-right: 2px solid #d0d0d0; }

.viewport { flex: 1; }
.scene { width: 2342px; height: 1257px; }
.profile { fill: none; stroke: #4f8798; stroke-width: 3; marker-mid: url(#pt); }
.axis { font-size: 22px; fill: #333; }
.dim { font: 21px "Liberation Sans", sans-serif; fill: #222; letter-spacing: 0; }
.timeline { height: 85px; border-top: 2px solid #c9c9c9; background: #f1f1f1; }

.browser { position: absolute; left: 7px; top: 201px; width: 214px; overflow: hidden; }
.browser-head { display: flex; align-items: center; gap: 17px; height: 42px; padding-left: 5px; border: 2px solid #d3d3d3; border-right: 0; background: #f2f2f2; color: #555; letter-spacing: 0; }
.node { display: flex; align-items: center; height: 41px; padding-left: 65px; gap: 18px; }
.node .cell { display: flex; align-items: center; flex: 1; height: 34px; padding-left: 5px; gap: 25px; background: #f0f0f0; font-size: 19px; letter-spacing: 0; }
.node .deep { gap: 15px; }
.node .deep span { margin-left: 8px; }
.node.root { height: 42px; margin: 5px 0 0; padding-left: 33px; gap: 19px; }
.root .cell { gap: 12px; }
.sel { display: flex; align-items: center; flex: 1; height: 27px; padding-left: 8px; gap: 24px; background: #929292; color: #fff; font-size: 18px; }
.hatch { background: repeating-linear-gradient(120deg, #6c7fa8 0 3px, transparent 3px 10px) 42px 25px / 200px 6px no-repeat #f0f0f0; }

.comments { position: absolute; left: 7px; top: 1401px; display: flex; align-items: center; justify-content: space-between; width: 511px; height: 42px; padding: 0 1px 0 43px; border-bottom: 2px solid #cdcdcd; border-right: 2px solid #cdcdcd; background: #f1f1f1; color: #555; font-size: 18.600px; letter-spacing: 0; }
.navbar { position: absolute; left: 1028px; top: 1405px; }

.panel { position: absolute; left: 1825px; top: 42px; width: 515px; height: 1500px; border: 2px solid #cbcbcb; background: #f1f1f1; }
.panel-head { display: flex; align-items: center; gap: 16px; height: 41px; padding-left: 7px; border-bottom: 2px solid #cfcfcf; color: #555; font-size: 17.500px; letter-spacing: 0; }
.brand { display: grid; height: 103px; padding: 10px 0 0 21px; }
.brand > * { grid-area: 1 / 1; }
.brand-text { width: 300px; padding-left: 110px; margin-top: -3px; text-align: center; color: #333; }
.brand-text b { display: block; font-size: 22px; line-height: 30px; letter-spacing: .840px; }
.brand-text small { display: block; font-size: 17px; line-height: 24px; margin-top: 2px; letter-spacing: -.100px; }
.brand-text p { display: flex; gap: 19px; margin: -2px 0 0 4px; line-height: 21px; }
.brand-text a { color: #1667b7; border-bottom: 2px solid #6fa0d8; }
.form { height: 945px; overflow: hidden; }
.row { display: flex; align-items: center; height: 51.200px; padding-left: 21px; color: #333; }
.row label { width: 146px; flex: none; letter-spacing: .400px; }
.input { width: 290px; height: 44px; padding-left: 4px; line-height: 39px; letter-spacing: 1px; border: 2px solid #cdcdcd; background: #fff; }
.pick { display: flex; align-items: center; gap: 12px; height: 46px; width: 138px; padding-left: 9px; margin-left: -1px; border: 2px solid #cdcdcd; background: #fff; letter-spacing: .500px; }
.pick.on { width: 101px; gap: 10px; background: #0696d7; border-color: #0696d7; color: #fff; }
.x { margin-left: 19px; }
.muted label { color: #b5b5b5; }
.value { margin: -8px 0 0 8px; letter-spacing: 1px; }
h3 { display: flex; align-items: center; gap: 11px; height: 52px; padding-left: 15px; font-size: 18.500px; letter-spacing: .450px; color: #222; }
.preset { height: 50px; }
.select { display: flex; align-items: center; justify-content: space-between; width: 292px; height: 45px; margin-left: -1px; padding: 0 9px 0 11px; border: 2px solid #cdcdcd; background: #fff; letter-spacing: .800px; }
.row.tall { align-items: flex-start; }
.tall label { padding-top: 14px; }
.medium { height: 262px; }
.box { position: relative; width: 158px; height: 243px; margin-top: 10px; padding: 15px 0 0 11px; border: 2px solid #222; color: #000; }
.box em { position: absolute; left: 39px; top: -13px; padding: 0 3px; background: #f1f1f1; color: #333; font-style: normal; }
.box p { display: flex; align-items: center; gap: 8px; height: 44.400px; line-height: 40px; font-size: 17.500px; letter-spacing: .700px; }
.box i { width: 24px; height: 24px; margin-top: 5px; border: 2px solid #444; border-radius: 50%; background: linear-gradient(#f4f4f4, #bcbcbc); flex: none; }
.box i.on { background: radial-gradient(#000 42%, #ddd 50%); }
.note { height: 45px; line-height: 34px; padding-left: 22px; letter-spacing: 1.400px; }
.flowrow { height: 171px; }
.box.wide { width: 228px; height: 155px; }
.box.wide em { left: 90px; }
.range { width: 490px; height: 119.600px; margin-left: 1px; border-top: 5px solid #c3c3c3; }
.range h3 { height: 61px; padding-left: 14px; }
.range .row { height: 42px; padding-left: 20px; }

.menu { position: absolute; border: 2px solid #6e6e6e; background: #fff; box-shadow: 4px 8px 26px rgba(0,0,0,.45); color: #444; }
.create-menu { left: 221px; top: 191px; width: 369px; height: 661px; padding: 2px 5px 0 6px; }
.sub-menu { left: 583px; top: 550px; width: 562px; height: 552px; padding: 2px 5px 0 6px; }
.item { display: flex; align-items: center; height: 35.850px; gap: 6px; }
.item > svg { width: 28px; height: 28px; }
.item > strong { width: 28px; font: bold 36px/28px "Open Sans", sans-serif; text-align: center; color: #555; letter-spacing: 0; }
.item span { flex: 1; }
.item .arrow { width: 10px; height: 18px; margin-right: 9px; }
.item kbd { width: 58px; font: inherit; }
.hot { background: #d8d8d8; }
.menu hr { height: 2px; margin: 0; border: 0; background: #6b6b6b; }

.tooltip { position: absolute; left: 1733px; top: 1087px; width: 418px; height: 32px; border: 2px solid #b4b4b4; background: #ececec; box-shadow: 2px 10px 28px rgba(0,0,0,.35); color: #000; font: 21.500px/28px Inter, sans-serif; letter-spacing: .150px; text-align: center; }
```
